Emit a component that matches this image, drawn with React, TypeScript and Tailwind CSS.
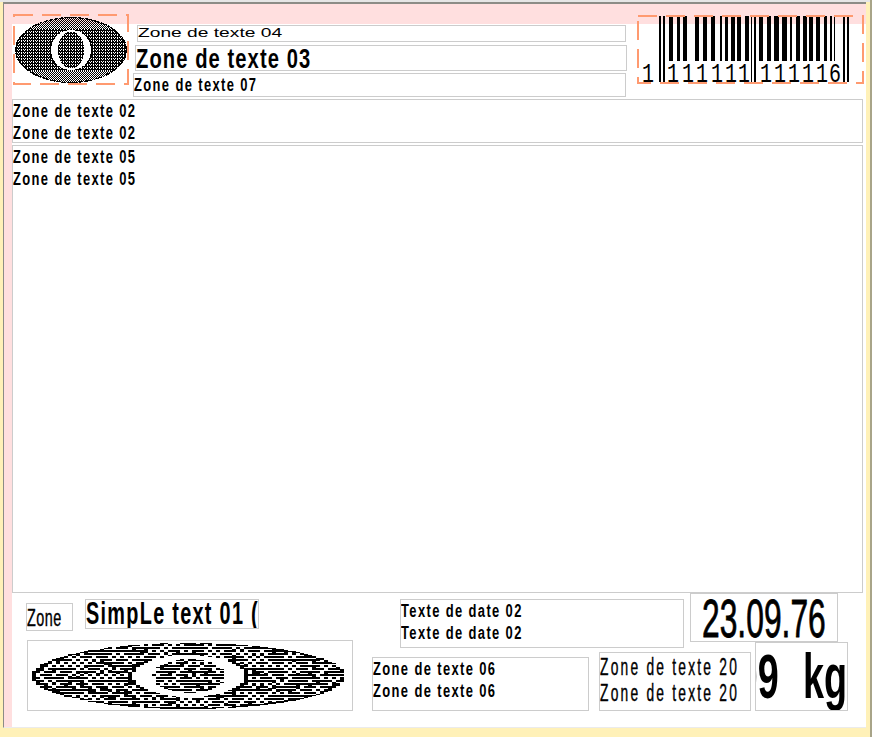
import React from "react";

const Box = ({ className, children }: { className: string; children?: React.ReactNode }) => (
  <div className={`shrink-0 overflow-hidden border border-[#cccccc] bg-white ${className}`}>{children}</div>
);

const Line = ({ className, children }: { className: string; children: React.ReactNode }) => (
  <div className={`origin-top-left whitespace-pre font-['Liberation_Sans',sans-serif] text-black ${className}`}>
    {children}
  </div>
);

// the usual two-line text of the label
const Small = ({ children }: { children: React.ReactNode }) => (
  <Line className="w-[180px] scale-x-[0.72] text-[18px] font-bold leading-[22px] tracking-[1.9px]">{children}</Line>
);

const bars: [number, number, boolean][] = [
  [659, 2, true], [663, 2, true], [669, 4, false], [677, 3, false], [683, 4, false], [695, 4, false],
  [703, 4, false], [711, 4, false], [720, 2, false], [725, 3, false], [731, 4, false], [737, 4, false],
  [745, 4, false], [751, 1, true], [754, 2, true], [759, 4, false], [767, 4, false], [774, 5, false],
  [782, 5, false], [790, 2, false], [796, 4, false], [803, 4, false], [809, 4, false], [816, 4, false],
  [824, 3, false], [830, 2, false], [834, 1, false], [843, 2, true], [847, 2, true],
];

const digits: [string, number][] = [
  ["1", 648], ["1", 673], ["1", 688], ["1", 702], ["1", 717], ["1", 731], ["1", 744],
  ["1", 766], ["1", 780], ["1", 794], ["1", 808], ["1", 822], ["6", 835],
];

// small stable noise so the dither doesn't change between renders
const noise = (a: number, b: number) => {
  const v = Math.sin(a * 127.1 + b * 311.7 + 4.1) * 43758.5453;
  return v - Math.floor(v);
};

type EyeProps = {
  width: number;
  height: number;
  cx: number;
  cy: number;
  rx: number;
  ry: number;
  ringX: number;
  ringY: number;
  coreX: number;
  coreY: number;
  cellW: number;
  cellH: number;
  pick: (row: number, col: number, mid: number) => boolean;
};

const Eye = ({ width, height, cx, cy, rx, ry, ringX, ringY, coreX, coreY, cellW, cellH, pick }: EyeProps) => {
  const cells: React.ReactNode[] = [];
  for (let row = 0; row * cellH < height; row++) {
    for (let col = 0; col * cellW < width; col++) {
      const x = col * cellW + cellW / 2 - cx;
      const y = row * cellH + cellH / 2 - cy;
      const outer = (x * x) / (rx * rx) + (y * y) / (ry * ry);
      if (outer > 1) continue;
      const ring = (x * x) / (ringX * ringX) + (y * y) / (ringY * ringY);
      const core = (x * x) / (coreX * coreX) + (y * y) / (coreY * coreY);
      if (ring < 1 && core > 1) continue;
      const edge = outer > 0.93 && noise(row + 3, col) < 0.7;
      const rim = ring >= 1 && ring < 1.15 && Math.abs(y) < ry * 0.45;
      if (!edge && !rim && !pick(row, col, 1 - Math.abs(y) / ry)) continue;
      cells.push(<rect key={`${row}-${col}`} x={col * cellW} y={row * cellH} width={cellW} height={cellH} fill="#000" />);
    }
  }
  return (
    <svg width={width} height={height} shapeRendering="crispEdges">
      {cells}
    </svg>
  );
};

const DashFrame = ({ w, h }: { w: number; h: number }) => (
  <svg className="absolute left-0 top-0" width={w} height={h}>
    <rect x="1" y="1" width={w - 2} height={h - 2} fill="none" stroke="#ff9a70" strokeWidth="2" strokeDasharray="19 9" />
  </svg>
);

export default function App() {
  return (
    <div className="relative h-[737px] w-[872px] overflow-hidden border-r-2 border-r-[#a8a488] bg-[#fff1b8]">
      <div className="h-[2px] bg-[#e6e6e6]" />
      {/* design surface */}
      <div className="ml-[3px] h-[726px] w-[863px] border-t-2 border-b border-l border-t-[#8c8c86] border-b-[#ebebeb] border-l-[#8c8c86] bg-[#ffdfdf] pl-[8px] pt-[20px]">
        <div className="h-full w-full bg-white" />
      </div>

      {/* the label's fields, over the surface */}
      <div className="absolute inset-0 flex flex-col pl-[12px] pt-[13px]">
        <div className="flex h-[86px] items-start">
          <div className="relative ml-[1px] mt-[1px] h-[71px] w-[117px] shrink-0">
            <Eye
              width={116}
              height={70}
              cx={58}
              cy={36}
              rx={56}
              ry={33}
              ringX={20}
              ringY={20}
              coreX={13}
              coreY={18.5}
              cellW={1}
              cellH={1}
              pick={(row, col, mid) =>
                mid < 0.35
                  ? (row + col) % 2 === 0
                  : !((row % 3 === 2 && col % 2 === 0) || (col % 3 === 2 && row % 3 === 0))
              }
            />
            <DashFrame w={116} h={71} />
          </div>

          <div className="ml-[3px] flex w-[494px] shrink-0 flex-col pt-[12px]">
            <Box className="ml-[4px] h-[17px] w-[489px]">
              <Line className="w-[120px] scale-x-[1.6] text-[12px] leading-[14px]">Zone de texte 04</Line>
            </Box>
            <Box className="ml-[2px] mt-[3px] h-[26px] w-[492px]">
              <Line className="w-[260px] scale-x-[0.72] text-[28px] font-bold leading-[25px] tracking-[1.5px]">
                Zone de texte 03
              </Line>
            </Box>
            <Box className="mt-[2px] h-[24px] w-[493px]">
              <Small>Zone de texte 07</Small>
            </Box>
          </div>

          {/* barcode */}
          <div className="relative ml-[10px] mt-[2px] h-[69px] w-[227px] shrink-0">
            <svg width="227" height="69">
              <g transform="translate(-637 -15)">
                {bars.map(([x, w, tall]) => (
                  <rect key={x} x={x} y={16} width={w} height={tall ? 66 : 45} fill="#000" />
                ))}
                {digits.map(([d, x], i) => (
                  <text
                    key={i}
                    x={x - 6}
                    y={82}
                    fontSize="28"
                    textLength="12"
                    lengthAdjust="spacingAndGlyphs"
                    fontFamily="'Liberation Mono', monospace"
                    fill="#000"
                  >
                    {d}
                  </text>
                ))}
              </g>
            </svg>
            <DashFrame w={227} h={69} />
          </div>
        </div>

        <Box className="h-[44px] w-[851px]">
          <Small>Zone de texte 02</Small>
          <Small>Zone de texte 02</Small>
        </Box>
        <Box className="mt-[2px] h-[448px] w-[851px]">
          <Small>Zone de texte 05</Small>
          <Small>Zone de texte 05</Small>
        </Box>

        {/* lower fields */}
        <div className="flex h-[47px] items-start">
          <Box className="ml-[14px] mt-[10px] h-[28px] w-[47px]">
            <Line className="w-[80px] scale-x-[0.6] text-[24px] leading-[27px] tracking-[0.8px] [-webkit-text-stroke:0.4px_black]">
              Zone
            </Line>
          </Box>
          <Box className="ml-[12px] mt-[6px] h-[30px] w-[174px]">
            <Line className="w-[290px] scale-x-[0.62] text-[32px] font-bold leading-[26px] tracking-[2.1px]">
              SimpLe text 01 (0
            </Line>
          </Box>
          <Box className="ml-[141px] mt-[6px] h-[49px] w-[284px]">
            <Small>Texte de date 02</Small>
            <Small>Texte de date 02</Small>
          </Box>
          <Box className="ml-[6px] h-[49px] w-[148px]">
            <Line className="ml-[11px] w-[230px] scale-x-[0.6] text-[53px] leading-[49px] [-webkit-text-stroke:0.8px_black]">
              23.09.76
            </Line>
          </Box>
        </div>

        <div className="flex h-[71px] items-end">
          <Box className="ml-[15px] h-[71px] w-[326px]">
            <Eye
              width={324}
              height={69}
              cx={161}
              cy={35}
              rx={157}
              ry={33}
              ringX={56}
              ringY={21}
              coreX={36}
              coreY={17}
              cellW={4}
              cellH={1}
              pick={(row, col) => {
                const band = Math.floor(row / 3);
                if (row % 3 === 2) return noise(col, row) < 0.12;
                return (band + col) % 2 === 0 || noise(band, col) < 0.5;
              }}
            />
          </Box>
          <Box className="ml-[19px] h-[54px] w-[217px]">
            <Small>Zone de texte 06</Small>
            <Small>Zone de texte 06</Small>
          </Box>
          <Box className="ml-[10px] h-[59px] w-[152px] pt-[1px]">
            <Line className="w-[250px] scale-x-[0.6] text-[23px] leading-[26px] tracking-[3.7px] [-webkit-text-stroke:0.4px_black]">
              Zone de texte 20
            </Line>
            <Line className="w-[250px] scale-x-[0.6] text-[23px] leading-[26px] tracking-[3.7px] [-webkit-text-stroke:0.4px_black]">
              Zone de texte 20
            </Line>
          </Box>
          <Box className="ml-[4px] flex h-[69px] w-[93px] justify-end">
            <Line className="shrink-0 origin-top-right scale-x-[0.6] text-[63px] font-bold leading-[66px] [word-spacing:23px]">
              09 kg
            </Line>
          </Box>
        </div>
      </div>
    </div>
  );
}
